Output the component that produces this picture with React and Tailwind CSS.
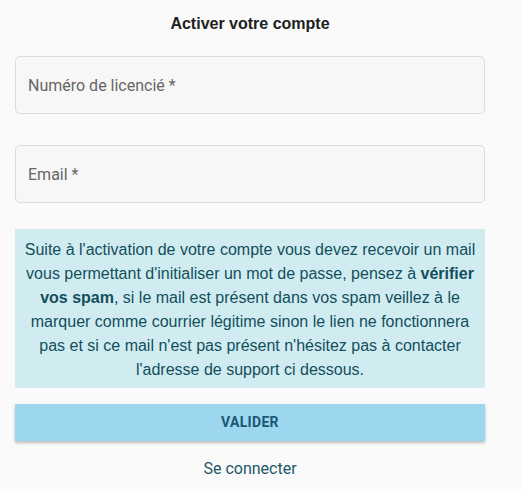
export default function App() {
  return (
    <div className="min-h-[489px] w-full bg-[#fafafa]">
      <div className="ml-[15px] w-[470px] flex flex-col">
        <div className="h-[44px] pt-[4px] flex items-center justify-center font-['Liberation_Sans',Arial,sans-serif] text-[16px] font-bold text-[#212121]">
          Activer votre compte
        </div>
        <div className="mt-[12px] h-[58px] pt-[1px] rounded-[5px] border border-[#dcdcdc] bg-[#f7f7f7] flex items-center px-[12px] font-['Roboto',sans-serif] text-[16px] text-[#666]">
          Numéro de licencié *
        </div>
        <div className="mt-[31px] h-[58px] pt-[1px] rounded-[5px] border border-[#dcdcdc] bg-[#f7f7f7] flex items-center px-[12px] font-['Roboto',sans-serif] text-[16px] text-[#666]">
          Email *
        </div>
        <div className="mt-[26px] h-[159px] bg-[#d1ecf1] px-[8px] pt-[9px] text-center font-['Liberation_Sans',Arial,sans-serif] text-[16px] leading-[24px] text-[#124f5c]">
          Suite à l'activation de votre compte vous devez recevoir un mail vous permettant d'initialiser un mot de passe, pensez à <span className="font-bold">vérifier vos spam</span>, si le mail est présent dans vos spam veillez à le marquer comme courrier légitime sinon le lien ne fonctionnera pas et si ce mail n'est pas présent n'hésitez pas à contacter l'adresse de support ci dessous.
        </div>
        <div className="mt-[16px] h-[37px] bg-[#9dd7ef] shadow-[0_2px_3px_rgba(0,0,0,0.25)] flex items-center justify-center font-['Roboto',sans-serif] text-[14px] font-bold tracking-[0.3px] text-[#1b5873]">
          VALIDER
        </div>
        <div className="mt-[16px] text-center font-['Roboto',sans-serif] text-[16px] leading-[24px] text-[#1d5766]">
          Se connecter
        </div>
      </div>
    </div>
  );
}
